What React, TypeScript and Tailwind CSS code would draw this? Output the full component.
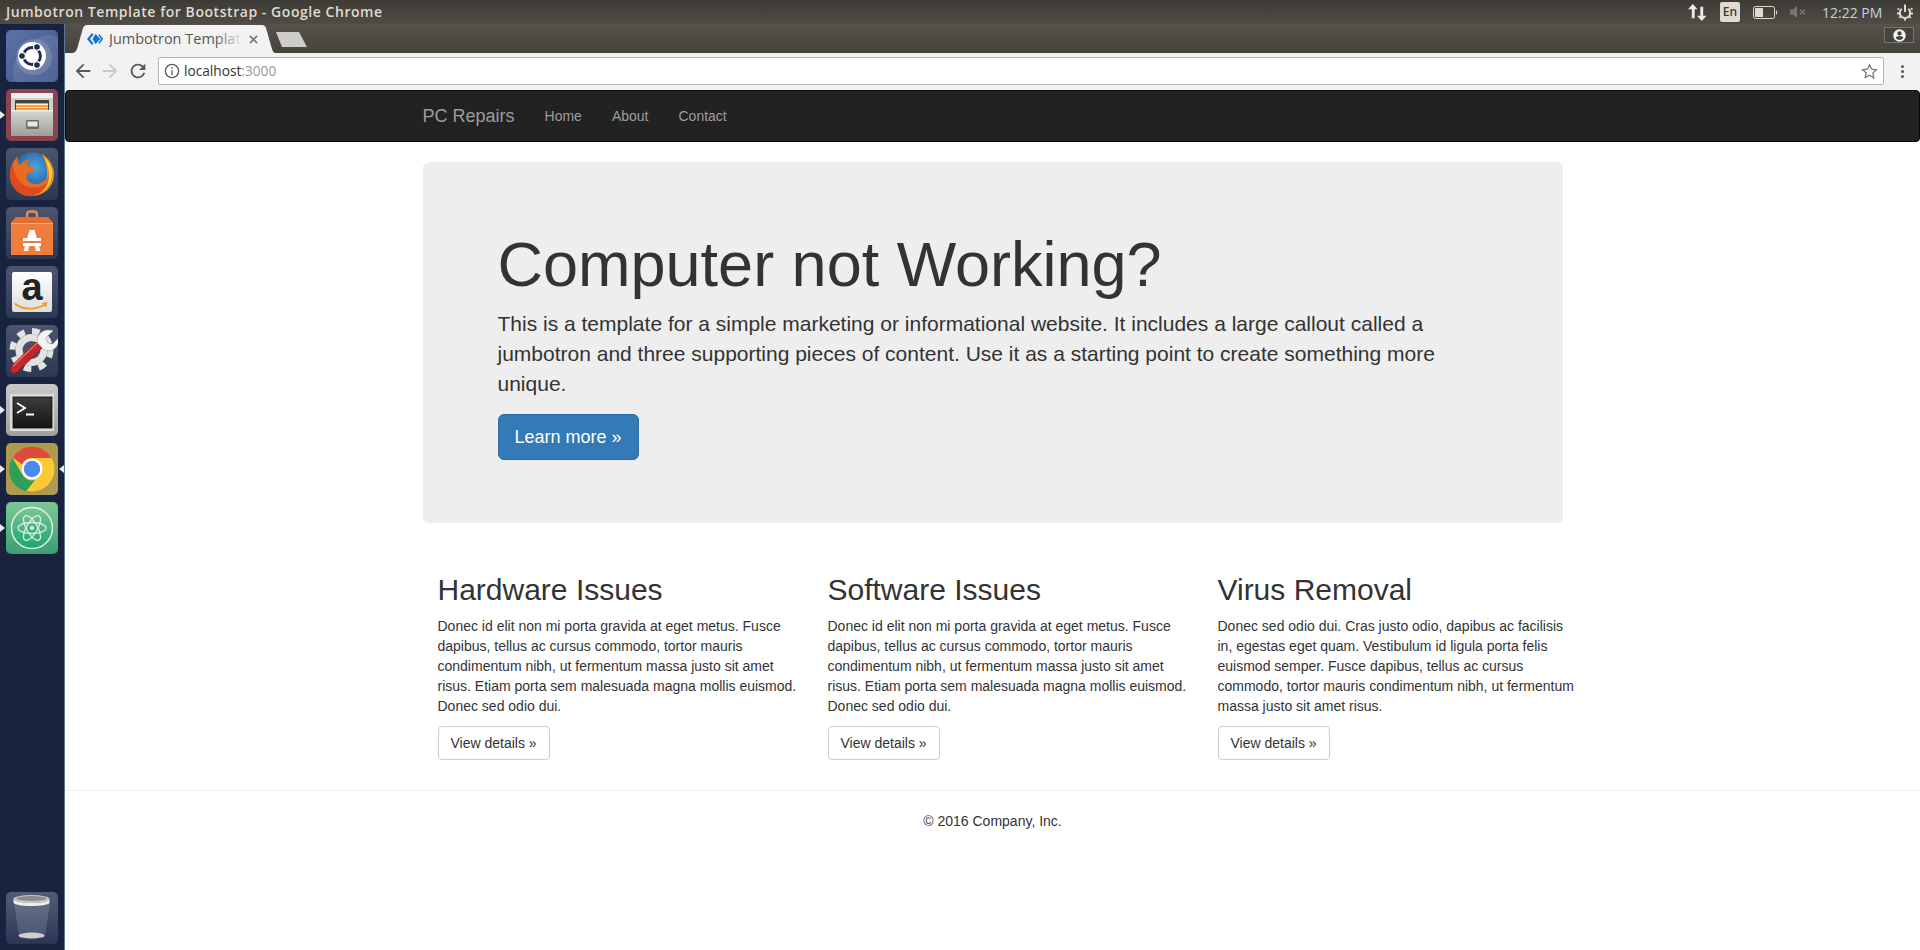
import React from "react";

const sans = "font-['Liberation_Sans',Arial,sans-serif]";

function Tile({ bg, pip, rightPip, children }: { bg: string; pip?: boolean; rightPip?: boolean; children: React.ReactNode }) {
  return (
    <div className={`relative w-[52px] h-[52px] rounded-[5px] shrink-0 ml-[6px] overflow-visible ${bg}`}>
      {children}
      {pip && <span className="absolute left-[-6px] top-[22px] w-0 h-0 border-y-[4px] border-y-transparent border-l-[5px] border-l-[#e8e8e8]" />}
      {rightPip && <span className="absolute right-[-6px] top-[22px] w-0 h-0 border-y-[4px] border-y-transparent border-r-[5px] border-r-[#e8e8e8]" />}
    </div>
  );
}

function UbuntuIcon() {
  return (
    <svg viewBox="0 0 52 52" className="w-full h-full">
      <path d="M7 46C6 26 22 8 44 5c4 0 8 2 8 5v37c0 3-2 5-5 5H12c-3 0-5-3-5-6z" fill="#fff" opacity=".1" />
      <circle cx="28" cy="27" r="18" fill="#fff" opacity=".14" />
      <circle cx="26" cy="26" r="14" fill="#fff" />
      <circle cx="26" cy="26" r="8.500" fill="none" stroke="#1d2a54" strokeWidth="2.800" />
      <circle cx="31" cy="17" r="3.400" fill="#1d2a54" stroke="#fff" strokeWidth="1.200" />
      <circle cx="16" cy="26" r="3.400" fill="#1d2a54" stroke="#fff" strokeWidth="1.200" />
      <circle cx="31" cy="35" r="3.400" fill="#1d2a54" stroke="#fff" strokeWidth="1.200" />
    </svg>
  );
}

function FilesIcon() {
  return (
    <svg viewBox="0 0 52 52" className="w-full h-full">
      <defs>
        <linearGradient id="cab" x1="0" y1="0" x2="0" y2="1">
          <stop offset="0" stopColor="#d8d7d2" />
          <stop offset="1" stopColor="#9f9e99" />
        </linearGradient>
      </defs>
      <rect x="5" y="4" width="42" height="43" rx="2" fill="#cfcec9" />
      <rect x="5" y="4" width="42" height="5" rx="1" fill="#f0f0ed" />
      <rect x="9" y="11" width="34" height="13" fill="#45453f" />
      <rect x="10" y="14" width="32" height="7" fill="#f09a3f" />
      <rect x="10" y="15" width="32" height="1.200" fill="#fde9c8" />
      <rect x="10" y="18" width="32" height="1" fill="#fde9c8" />
      <rect x="5" y="21" width="42" height="26" rx="1" fill="url(#cab)" />
      <rect x="5" y="21" width="42" height="1.500" fill="#eeeeeb" />
      <rect x="20" y="31" width="13" height="9" rx="1.500" fill="#6a6a66" />
      <rect x="21.500" y="32.500" width="10" height="5" fill="#e8e8e6" />
    </svg>
  );
}

function FirefoxIcon() {
  return (
    <svg viewBox="0 0 52 52" className="w-full h-full">
      <defs>
        <radialGradient id="ffb" cx=".55" cy=".35" r=".6">
          <stop offset="0" stopColor="#4aa5dc" />
          <stop offset="1" stopColor="#1f4f97" />
        </radialGradient>
      </defs>
      <circle cx="27" cy="26" r="21.500" fill="url(#ffb)" />
      <path d="M36 6C46 12 50 24 47 33 44 42 36 47 28 48 36 42 42 34 41 24 41 16 38 10 36 6z" fill="#f28c1f" />
      <path d="M38 9C45 15 48 24 45 32 43 38 39 42 35 44 40 38 44 30 43 23 42 18 40 13 38 9z" fill="#fbd341" />
      <path d="M12 8C11 12 12 15 14 17 17 13 21 11 25 11 22 13 20 16 21 18 24 18 27 19 29 21 28 24 25 24 22 25 20 27 20 30 21 32 25 37 33 37 38 33 40 32 42 29 43 27 44 38 35 48 24 48 12 48 4 38 4 27 4 19 7 13 12 8z" fill="#ea6a1f" />
      <path d="M4 27C4 23 5 19 7 16 7 24 11 32 18 37 24 41 33 41 41 35 37 43 31 48 24 48 12 48 4 38 4 27z" fill="#dc4a1d" />
    </svg>
  );
}

function BagIcon() {
  return (
    <svg viewBox="0 0 52 52" className="w-full h-full">
      <path d="M21 14V8c0-2 1-3.500 3-3.500h4c2 0 3 1.500 3 3.500v6" fill="none" stroke="#e88a57" strokeWidth="2.400" />
      <path d="M10 10h32l5 6v32H5V16z" fill="#ee7d3e" />
      <path d="M10 10h32l5 6H5z" fill="#e46f33" />
      <path d="M5 16h42v1H5z" fill="#f8ab7d" />
      <path d="M23.500 23h5l6 21h-4.500l-1.300-5h-5.400l-1.300 5H17.500z" fill="#fff" />
      <rect x="17" y="31" width="18" height="3" fill="#fff" />
      <rect x="17" y="34" width="18" height="2" fill="#ee7d3e" />
      <rect x="17" y="36" width="18" height="3" fill="#fff" />
    </svg>
  );
}

function WrenchIcon() {
  return (
    <svg viewBox="0 0 52 52" className="w-full h-full">
      <circle cx="25.500" cy="25" r="16" fill="#e2e2e0" />
      <circle cx="25.500" cy="25" r="19" fill="none" stroke="#e2e2e0" strokeWidth="6" strokeDasharray="7.500 7.420" />
      <circle cx="25.500" cy="25" r="9" fill="#4a5268" />
      <path d="M5.500 41 30 17l6 6-24.500 24c-2 2-4.500 2-6 .5s-1.500-4.500 0-6.500z" fill="#c4262a" stroke="#7c1818" strokeWidth=".8" />
      <path d="M7 41 31 18" stroke="#ea6f69" strokeWidth="1.400" />
      <path d="M47 6l-7 6.500 1.500 5 5 1.500 6-6c.5 5-1 9-5 11.500-3.500 2-7 1.500-10 0l-6-6.500c-1-4 .5-8.500 4-11 3.500-2.500 8-2.500 11.500-1.500z" fill="#f3f3f1" stroke="#8a8a88" strokeWidth=".5" />
    </svg>
  );
}

function TerminalIcon() {
  return (
    <svg viewBox="0 0 52 52" className="w-full h-full">
      <defs>
        <linearGradient id="trm" x1="0" y1="0" x2="0" y2="1">
          <stop offset="0" stopColor="#3c3c3c" />
          <stop offset="1" stopColor="#151515" />
        </linearGradient>
      </defs>
      <rect x="4" y="10" width="44" height="37" fill="#dcdcdc" />
      <rect x="7" y="13" width="39" height="31" fill="url(#trm)" stroke="#0a0a0a" strokeWidth=".8" />
      <path d="M11 19l8 5-8 5" fill="none" stroke="#fff" strokeWidth="1.800" />
      <rect x="20" y="29.500" width="8" height="2" fill="#fff" />
    </svg>
  );
}

function ChromeIcon() {
  return (
    <svg viewBox="0 0 52 52" className="w-full h-full">
      <circle cx="26" cy="26" r="22.500" fill="#fbc934" />
      <path d="M26 3.500A22.500 22.500 0 0 1 45.500 15H26a11 11 0 0 0-10 6.500L6.800 14.500A22.500 22.500 0 0 1 26 3.500z" fill="#dd4b3e" />
      <path d="M6.500 14.800 16 31a11 11 0 0 0 13 6l-9 11.500A22.500 22.500 0 0 1 6.500 14.800z" fill="#2f9e58" />
      <circle cx="26" cy="26" r="10.500" fill="#fff" />
      <circle cx="26" cy="26" r="8.200" fill="#4a87ee" />
    </svg>
  );
}

function AtomIcon() {
  return (
    <svg viewBox="0 0 52 52" className="w-full h-full">
      <defs>
        <linearGradient id="atm" x1="0" y1="0" x2="0" y2="1">
          <stop offset="0" stopColor="#7dc594" />
          <stop offset="1" stopColor="#17a673" />
        </linearGradient>
      </defs>
      <circle cx="26" cy="26" r="20.500" fill="url(#atm)" stroke="#dcefe1" strokeWidth="1.600" />
      <g fill="none" stroke="#dcefe1" strokeWidth="1.300">
        <ellipse cx="26" cy="26" rx="14" ry="5.500" transform="rotate(0 26 26)" />
        <ellipse cx="26" cy="26" rx="14" ry="5.500" transform="rotate(60 26 26)" />
        <ellipse cx="26" cy="26" rx="14" ry="5.500" transform="rotate(120 26 26)" />
      </g>
      <circle cx="26" cy="26" r="2" fill="#dcefe1" />
    </svg>
  );
}

function TrashIcon() {
  return (
    <svg viewBox="0 0 52 52" className="w-full h-full">
      <path d="M8 10h36l-5 35c-3 2-23 2-26 0z" fill="#fff" opacity=".14" />
      <ellipse cx="25.500" cy="43.500" rx="13" ry="3" fill="#cfcfca" />
      <ellipse cx="25.500" cy="7" rx="18" ry="4" fill="#c8c8c3" />
      <path d="M7.500 7v3.500c0 2 8 3.500 18 3.500s18-1.500 18-3.500V7c0 2-8 4-18 4s-18-2-18-4z" fill="#ededea" />
      <ellipse cx="25.500" cy="6.500" rx="15" ry="2.400" fill="#8d8d88" />
    </svg>
  );
}

function Launcher() {
  const dark = "bg-[linear-gradient(180deg,#4b556d,#2c3854)]";
  return (
    <aside className="w-[65px] shrink-0 bg-[#17233f] border-r border-r-[#5d7596] flex flex-col pt-[6px] gap-[7px] pb-[6px]">
      <Tile bg="bg-[linear-gradient(135deg,#5e74a8,#3c5289)]"><UbuntuIcon /></Tile>
      <Tile bg="bg-[#8b4350]" pip><FilesIcon /></Tile>
      <Tile bg={dark}><FirefoxIcon /></Tile>
      <Tile bg={dark}><BagIcon /></Tile>
      <Tile bg={dark}>
        <div className="absolute inset-[6px] rounded-[2px] bg-[linear-gradient(180deg,#ffffff,#dcdcdc)] flex flex-col items-center">
          <span className={`${sans} font-bold text-[38px] leading-[30px] text-[#222]`}>a</span>
          <svg viewBox="0 0 40 10" className="w-[36px] h-[9px]">
            <path d="M1 2c9 7 23 7 33 1" fill="none" stroke="#f39a1f" strokeWidth="2" />
            <path d="M31 1l6-1-1 6z" fill="#f39a1f" />
          </svg>
        </div>
      </Tile>
      <Tile bg={dark}><WrenchIcon /></Tile>
      <Tile bg="bg-[linear-gradient(180deg,#c9c9c9,#a0a0a0)]" pip><TerminalIcon /></Tile>
      <Tile bg="bg-[#ad9a4f]" pip rightPip><ChromeIcon /></Tile>
      <Tile bg="bg-[linear-gradient(180deg,#7cc695,#3d9d73)]" pip><AtomIcon /></Tile>
      <div className="flex-1" />
      <Tile bg="bg-[linear-gradient(180deg,#525e78,#2a3654)]"><TrashIcon /></Tile>
    </aside>
  );
}

function TopBar() {
  return (
    <header className="h-6 shrink-0 flex items-center bg-[linear-gradient(180deg,#3d3b35,#4f4c45)] pl-[6px] text-[#dfdbd2]">
      <span className="font-['Open_Sans',sans-serif] font-semibold text-[14px] tracking-[0.55px] leading-none">Jumbotron Template for Bootstrap - Google Chrome</span>
      <div className="ml-auto flex items-center">
        <svg viewBox="0 0 20 18" className="w-[19px] h-[17px] mr-[13px]" fill="#ecebe6">
          <path d="M5 0l5 5.500H7V15H4V5.500H0z" />
          <path d="M13 3h3v9.500h3.500L14.500 18l-5-5.500H13z" />
        </svg>
        <span className="w-5 h-5 rounded-[2px] bg-[#dfdbd2] text-[#3c3b37] font-['Open_Sans',sans-serif] font-semibold text-[12px] leading-5 text-center mr-[13px]">En</span>
        <svg viewBox="0 0 25 13" className="w-[25px] h-[13px] mr-[12px]">
          <rect x=".5" y=".5" width="21" height="12" rx="2" fill="none" stroke="#dfdbd2" />
          <rect x="2" y="2" width="8" height="9" fill="#dfdbd2" />
          <path d="M23 4c1.500 1 1.500 4 0 5z" fill="#dfdbd2" />
        </svg>
        <svg viewBox="0 0 18 12" className="w-[18px] h-3 mr-[14px]" fill="#77756d">
          <path d="M0 3.500h3L7 0v12L3 8.500H0z" />
          <path d="M10 3.500l5 5M15 3.500l-5 5" stroke="#77756d" strokeWidth="1.600" />
        </svg>
        <span className="font-['Open_Sans',sans-serif] text-[14px] text-[#c6d3df] w-[62px] mr-[12px] whitespace-nowrap">12:22 PM</span>
        <svg viewBox="0 0 18 18" className="w-[18px] h-[18px] mr-[6px]" fill="none" stroke="#dfdbd2">
          <path d="M9 1.500v7.500" strokeWidth="2" />
          <path d="M5.700 5.800a5.200 5.200 0 1 0 6.600 0" strokeWidth="2" />
          <path d="M3 6.500 1.500 5.500M1 10.500H3M3.300 15l1.200-1.500M9 17.500v-2M14.700 15l-1.200-1.500M17 10.500h-2M15 6.500l1.500-1" strokeWidth="2" />
        </svg>
      </div>
    </header>
  );
}

function TabStrip() {
  return (
    <div className="h-[29px] shrink-0 flex items-end bg-[linear-gradient(180deg,#55524a,#45433c)] relative">
      <div className="relative ml-[7px] w-[204px] h-[28px] flex items-center pl-[15px] pr-[18px]">
        <svg viewBox="0 0 204 28" preserveAspectRatio="none" className="absolute inset-0 w-full h-full">
          <path d="M0 28C3 28 4 26 5 24L11 3C12 1 13 0 15 0H190C192 0 193 1 194 3L200 24C201 27 202 28 204 28z" fill="#f2f2f2" />
        </svg>
        <svg viewBox="0 0 16 12" className="relative w-4 h-3 shrink-0">
          <path d="M5 0 0 6l5 6 1.500-1.500L3 6l3.500-4.500z" fill="#0a76d8" />
          <path d="M8.500 1 13.500 6l-5 5-3-5z" fill="#0a76d8" />
          <path d="M12.500 1 16 6l-3.500 5-1-1L14 6l-2.500-4z" fill="#0a76d8" />
        </svg>
        <div className="relative ml-[6px] w-[134px] overflow-hidden whitespace-nowrap font-['Open_Sans',sans-serif] text-[14.5px] leading-5 text-[#555]">
          Jumbotron Template for Bootstrap
          <span className="absolute right-0 top-0 h-full w-7 bg-[linear-gradient(90deg,rgba(242,242,242,0),#f2f2f2)]" />
        </div>
        <svg viewBox="0 0 10 10" className="relative ml-auto w-[9px] h-[9px]" stroke="#7a7a7a" strokeWidth="1.800">
          <path d="M1 1l8 8M9 1l-8 8" />
        </svg>
      </div>
      <svg viewBox="0 0 32 15" className="w-8 h-[15px] ml-[-1px] mb-[6px]">
        <path d="M1 0H24L32 15H7z" fill="#cdccc9" />
      </svg>
      <div className="ml-auto mr-[6px] mb-[10px] w-[30px] h-[16px] border border-[#77756f] bg-[#45433d] flex items-center justify-center">
        <svg viewBox="0 0 24 24" className="w-[15px] h-[15px]" fill="#f2f2f2">
          <path d="M12 2a10 10 0 1 0 0 20 10 10 0 0 0 0-20zm0 3a3.500 3.500 0 1 1 0 7 3.500 3.500 0 0 1 0-7zm0 14.200a7.500 7.500 0 0 1-6-3.200c0-2 4-3.100 6-3.100s6 1.100 6 3.100a7.500 7.500 0 0 1-6 3.200z" />
        </svg>
      </div>
    </div>
  );
}

function Toolbar() {
  return (
    <div className="h-[37px] shrink-0 bg-[#f2f2f2] flex items-start pt-[4px]">
      <div className="flex items-center h-[28px] pl-[6.5px] gap-[5.5px]">
        <svg viewBox="0 0 24 24" className="w-[22px] h-[22px]" fill="#5a5a5a"><path d="M20 11H7.830l5.590-5.590L12 4l-8 8 8 8 1.410-1.410L7.830 13H20v-2z" /></svg>
        <svg viewBox="0 0 24 24" className="w-[22px] h-[22px]" fill="#c8c8c8"><path d="M12 4l-1.410 1.410L16.170 11H4v2h12.170l-5.580 5.590L12 20l8-8z" /></svg>
        <svg viewBox="0 0 24 24" className="w-[22px] h-[22px]" fill="#5a5a5a"><path d="M17.650 6.350C16.200 4.900 14.210 4 12 4c-4.420 0-7.990 3.580-7.990 8s3.570 8 7.990 8c3.730 0 6.840-2.550 7.730-6h-2.080c-.820 2.330-3.040 4-5.650 4-3.310 0-6-2.690-6-6s2.690-6 6-6c1.660 0 3.140.690 4.220 1.780L13 11h7V4l-2.350 2.350z" /></svg>
      </div>
      <div className="ml-[9px] w-[1726px] h-[28px] bg-white border border-[#b4b4b4] rounded-[2px] flex items-center pl-[5px] pr-[5px]">
        <svg viewBox="0 0 24 24" className="w-[16px] h-[16px]" fill="none" stroke="#5a5a5a" strokeWidth="2">
          <circle cx="12" cy="12" r="10" />
          <path d="M12 11v7M12 6v2.500" />
        </svg>
        <span className="ml-[4.5px] font-['Open_Sans',sans-serif] text-[13.7px] text-[#333]">localhost<span className="text-[#999]">:3000</span></span>
        <svg viewBox="0 0 24 24" className="ml-auto w-[17px] h-[17px]" fill="none" stroke="#777" strokeWidth="1.800">
          <path d="M12 2.500l2.900 6.300 6.900.800-5.100 4.700 1.400 6.800L12 17.200l-6.100 3.400 1.400-6.800L2.200 9.600l6.900-.800z" />
        </svg>
      </div>
      <div className="ml-[17px] flex flex-col gap-[2px] h-[28px] justify-center">
        <span className="w-[3px] h-[3px] rounded-full bg-[#5a5a5a]" />
        <span className="w-[3px] h-[3px] rounded-full bg-[#5a5a5a]" />
        <span className="w-[3px] h-[3px] rounded-full bg-[#5a5a5a]" />
      </div>
    </div>
  );
}

function Col({ title, text }: { title: string; text: string }) {
  return (
    <div className="w-[390px] shrink-0 px-[15px]">
      <h2 className="text-[30px] leading-[33px] mt-5 mb-[10px] font-medium">{title}</h2>
      <p className="text-[14px] leading-5 mb-[10px]">{text}</p>
      <a className="inline-block h-[34px] px-3 py-[6px] text-[14px] leading-5 border border-[#ccc] rounded-[4px] bg-white">View details »</a>
    </div>
  );
}

const lorem = "Donec id elit non mi porta gravida at eget metus. Fusce dapibus, tellus ac cursus commodo, tortor mauris condimentum nibh, ut fermentum massa justo sit amet risus. Etiam porta sem malesuada magna mollis euismod. Donec sed odio dui.";
const lorem3 = "Donec sed odio dui. Cras justo odio, dapibus ac facilisis in, egestas eget quam. Vestibulum id ligula porta felis euismod semper. Fusce dapibus, tellus ac cursus commodo, tortor mauris condimentum nibh, ut fermentum massa justo sit amet risus.";

function Page() {
  return (
    <main className={`flex-1 min-h-0 bg-white text-[#333] ${sans} overflow-hidden`}>
      <nav className="h-[52px] bg-[#222] border border-[#080808] rounded-[4px] pl-[356.5px] flex items-center text-[#9d9d9d]">
        <span className="text-[18px] leading-5 mr-[30px]">PC Repairs</span>
        <a className="text-[14px] leading-5 mr-[30px]">Home</a>
        <a className="text-[14px] leading-5 mr-[30px]">About</a>
        <a className="text-[14px] leading-5">Contact</a>
      </nav>
      <div className="w-[1140px] mx-auto mt-5">
        <section className="h-[361px] bg-[#eee] rounded-[6px] px-[75px] pt-[48px]">
          <h1 className="text-[63px] leading-[69.3px] mt-5 mb-[10px] font-medium">Computer not Working?</h1>
          <p className="text-[21px] leading-[30px] mb-[15px]">This is a template for a simple marketing or informational website. It includes a large callout called a jumbotron and three supporting pieces of content. Use it as a starting point to create something more unique.</p>
          <a className="inline-block h-[46px] px-4 py-[10px] text-[18px] leading-[24px] text-white bg-[#337ab7] border border-[#2e6da4] rounded-[6px]">Learn more »</a>
        </section>
        <div className="mt-[30px] flex">
          <Col title="Hardware Issues" text={lorem} />
          <Col title="Software Issues" text={lorem} />
          <Col title="Virus Removal" text={lorem3} />
        </div>
      </div>
      <footer className="mt-[30px] border-t border-t-[#eee] pt-5 text-center text-[14px] leading-5">© 2016 Company, Inc.</footer>
    </main>
  );
}

export default function App() {
  return (
    <div className="w-[1920px] h-[950px] flex flex-col overflow-hidden">
      <TopBar />
      <div className="flex flex-1 min-h-0">
        <Launcher />
        <div className="flex-1 min-w-0 flex flex-col">
          <TabStrip />
          <Toolbar />
          <Page />
        </div>
      </div>
    </div>
  );
}
